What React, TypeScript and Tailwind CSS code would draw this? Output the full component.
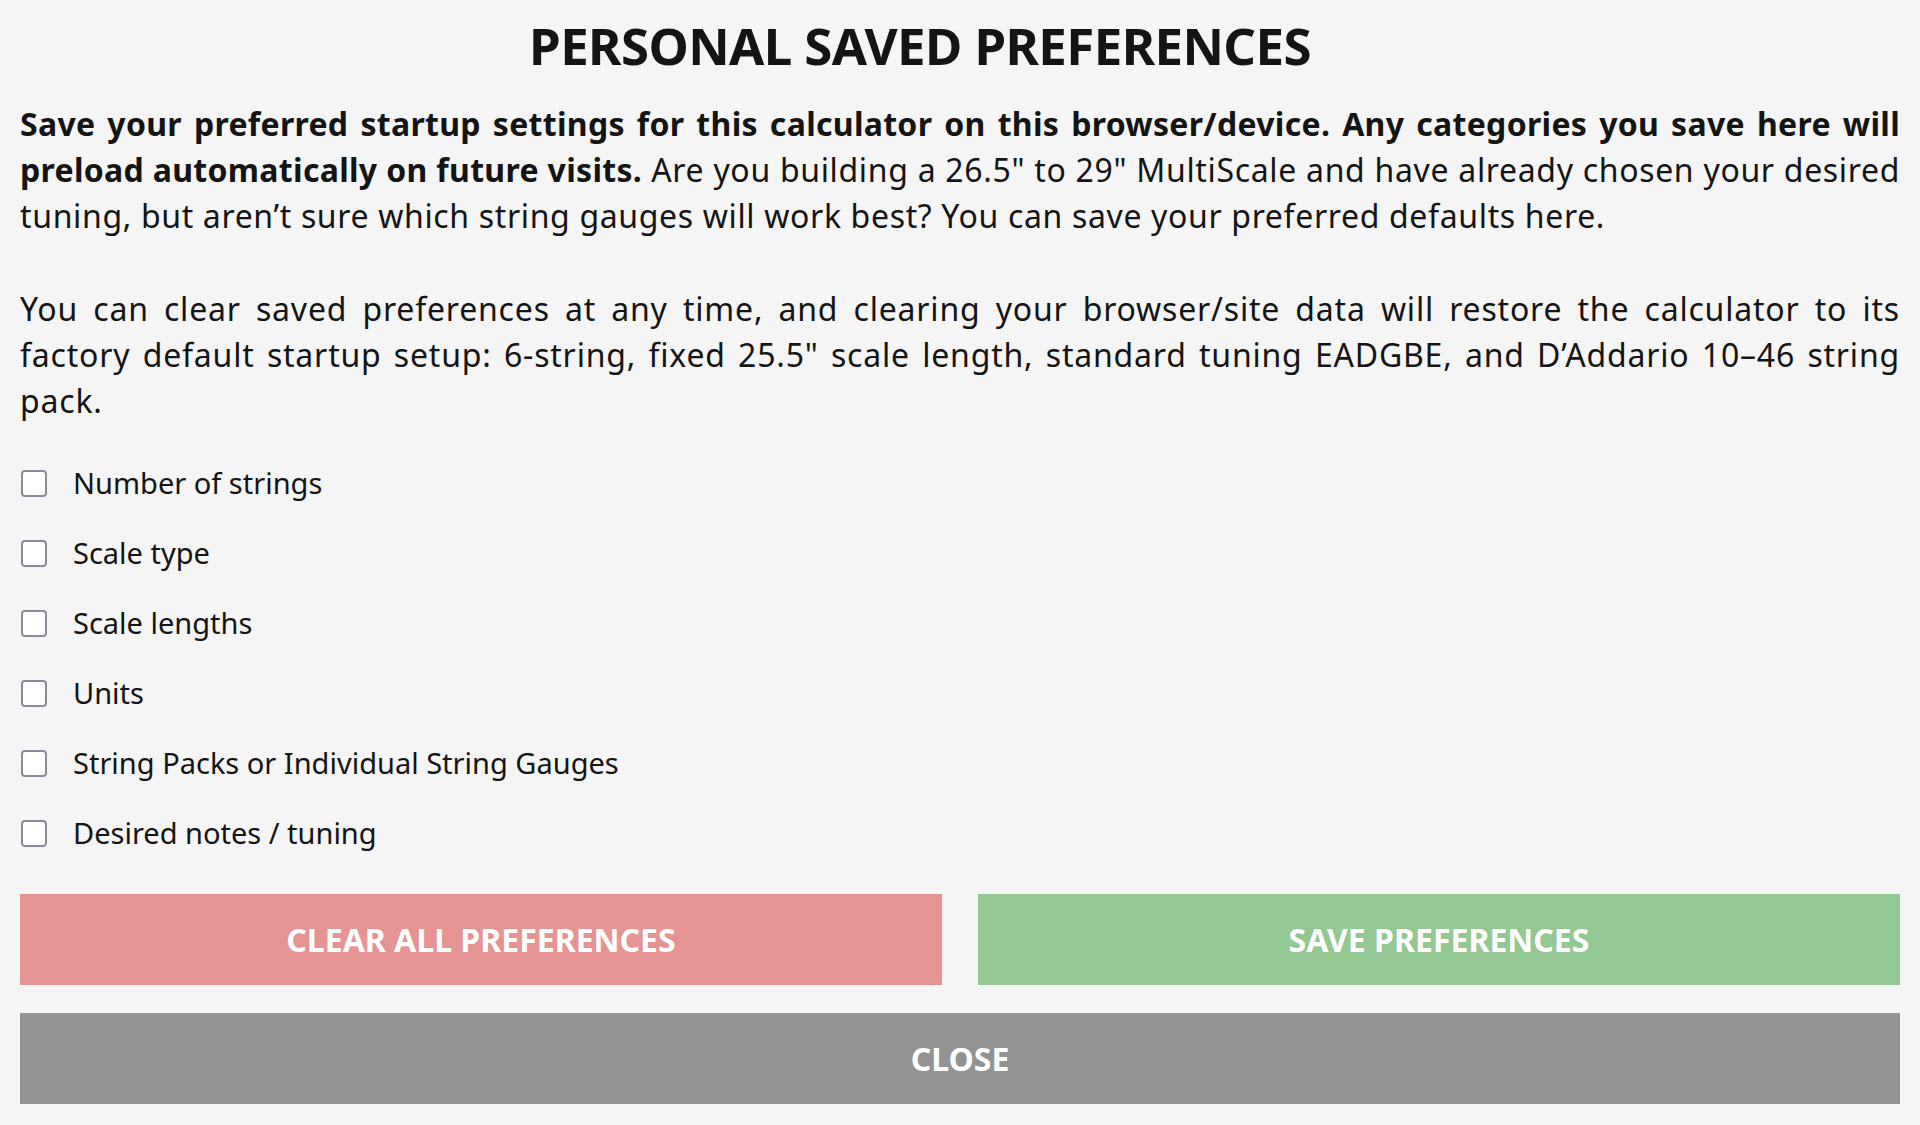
import { useState } from 'react'

const OPTIONS = [
  'Number of strings',
  'Scale type',
  'Scale lengths',
  'Units',
  'String Packs or Individual String Gauges',
  'Desired notes / tuning',
]

export default function App() {
  const [checked, setChecked] = useState<boolean[]>(Array(OPTIONS.length).fill(false))

  const toggle = (index: number) => {
    const next = [...checked]
    next[index] = !next[index]
    setChecked(next)
  }

  return (
    <div
      className="min-h-screen bg-[#f5f5f5] px-[20px] pt-[15px] pb-[20px] text-[#141414]"
      style={{ fontFamily: '"Noto Sans", "Open Sans", sans-serif' }}
    >
      <h1 className="pr-[80px] text-center text-[51px] font-bold leading-[60px] tracking-[-0.6px]">
        PERSONAL SAVED PREFERENCES
      </h1>

      <div className="mt-[26px] text-justify text-[32px] leading-[46px] tracking-[0.65px]">
        <p>
          <strong className="font-bold tracking-[0.3px]">
            Save your preferred startup settings for this calculator on this browser/device. Any
            categories you save here will preload automatically on future visits.
          </strong>{' '}
          Are you building a 26.5" to 29" MultiScale and have already chosen your desired tuning, but
          aren’t sure which string gauges will work best? You can save your preferred defaults here.
        </p>
        <p className="mt-[47px] tracking-[0.8px]">
          You can clear saved preferences at any time, and clearing your browser/site data will
          restore the calculator to its factory default startup setup: 6-string, fixed 25.5" scale
          length, standard tuning EADGBE, and D’Addario 10–46 string pack.
        </p>
      </div>

      <div className="mt-[24px] flex flex-col">
        {OPTIONS.map((label, index) => (
          <label key={label} className="flex h-[70px] cursor-pointer items-center gap-[26px]">
            <input
              type="checkbox"
              checked={checked[index]}
              onChange={() => toggle(index)}
              className="ml-[1px] h-[27px] w-[26px] shrink-0 cursor-pointer appearance-none rounded-[4px] border-2 border-[#8d899b] bg-white checked:bg-[#8d899b]"
            />
            <span className="text-[29px] leading-[40px]">{label}</span>
          </label>
        ))}
      </div>

      <div className="mt-[26px] grid grid-cols-2 gap-x-[36px] gap-y-[28px]">
        <button className="h-[91px] bg-[#e59393] text-[32px] font-bold text-white">
          CLEAR ALL PREFERENCES
        </button>
        <button className="h-[91px] bg-[#94c893] text-[32px] font-bold text-white">
          SAVE PREFERENCES
        </button>
        <button className="col-span-2 h-[91px] bg-[#939393] text-[32px] font-bold text-white">
          CLOSE
        </button>
      </div>
    </div>
  )
}
